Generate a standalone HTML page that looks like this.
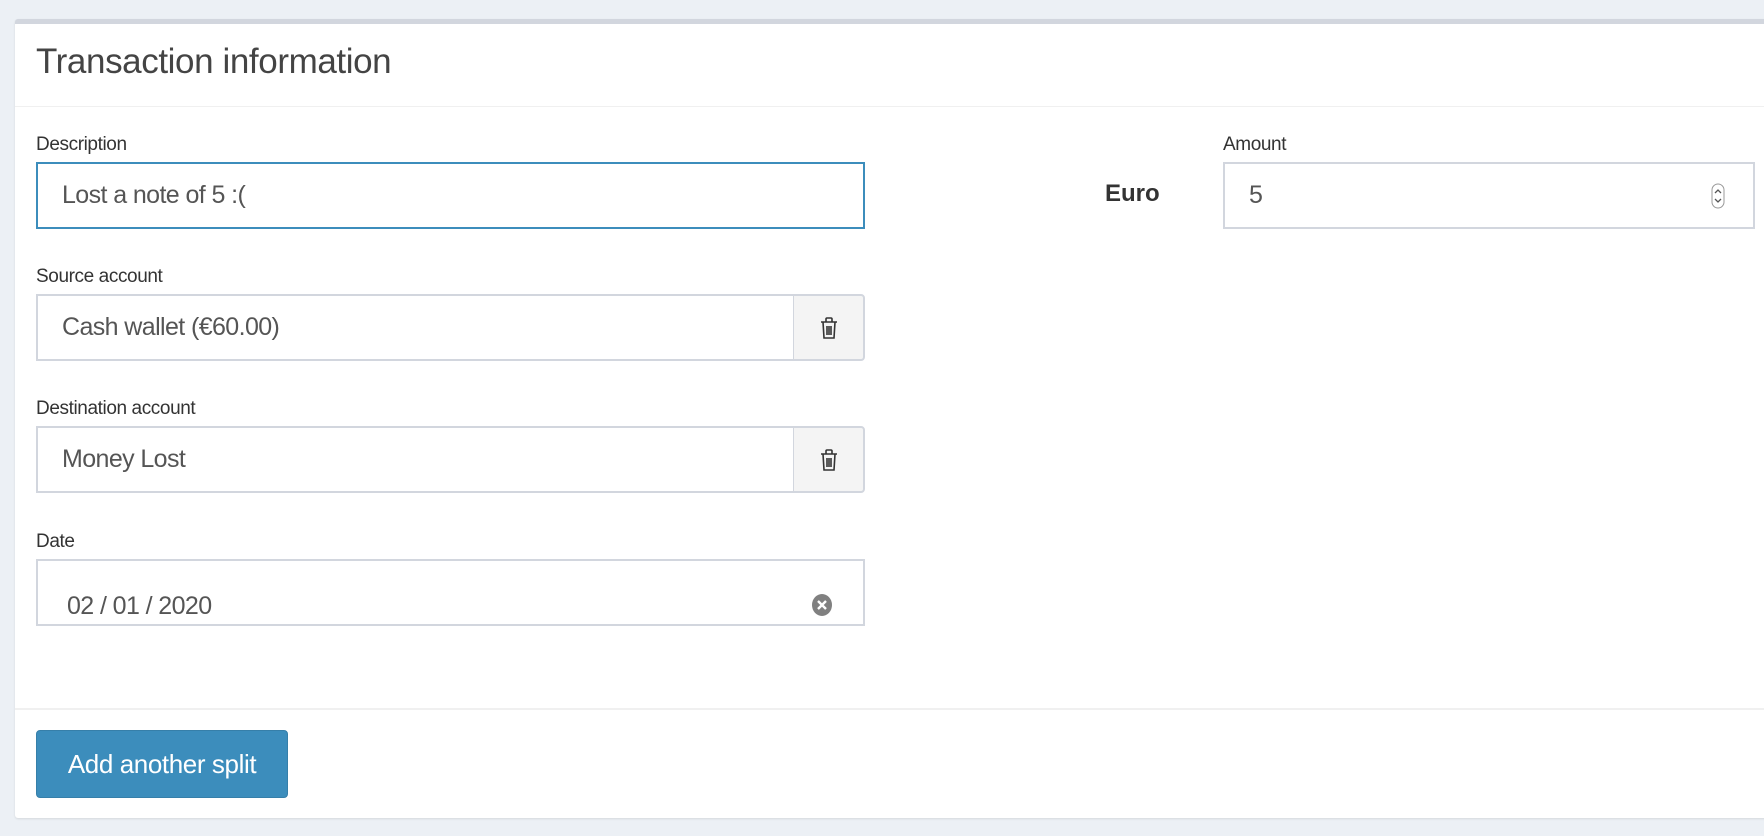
<!DOCTYPE html>
<html><head><style>
*{box-sizing:border-box;margin:0;padding:0}
body{width:1764px;height:836px;background:#ecf0f5;font-family:"Liberation Sans",sans-serif;position:relative;overflow:hidden;color:#333}
.card{position:absolute;left:15px;top:19px;width:1760px;height:799px;background:#fff;border-top:5px solid #d2d6de;border-radius:3px;box-shadow:0 1px 2px rgba(0,0,0,.1)}
.abs{position:absolute;white-space:nowrap}
.h{left:36px;top:42px;font-size:35px;color:#444;letter-spacing:-0.4px}
.hr{left:15px;width:1760px;height:1px;background:#f0f0f0}
.lbl{font-size:19px;color:#333;letter-spacing:-0.4px}
.in{border:2px solid #d2d6de;background:#fff;font-size:25px;color:#555;padding-left:24px;display:flex;align-items:center;letter-spacing:-0.6px}
.btn{background:#f4f4f4;border:2px solid #d2d6de;border-left:1px solid #d2d6de;border-radius:0 4px 4px 0;display:flex;align-items:center;justify-content:center}
</style></head><body>
<div class="card"></div>
<div class="abs h">Transaction information</div>
<div class="abs hr" style="top:106px"></div>

<div class="abs lbl" style="left:36px;top:134px">Description</div>
<div class="abs in" style="left:36px;top:162px;width:829px;height:67px;border-color:#3c8dbc">Lost a note of 5 :(</div>

<div class="abs lbl" style="left:1223px;top:134px">Amount</div>
<div class="abs" style="left:1105px;top:180px;font-size:24px;font-weight:bold;color:#333">Euro</div>
<div class="abs in" style="left:1223px;top:162px;width:532px;height:67px">5</div>
<svg class="abs" style="left:1711px;top:183px" width="14" height="26" viewBox="0 0 14 26"><rect x="1" y="1" width="12" height="24" rx="6" fill="#fff" stroke="#999"/><path d="M4 10l3-3 3 3M4 16l3 3 3-3" fill="none" stroke="#555" stroke-width="1.3"/></svg>

<div class="abs lbl" style="left:36px;top:266px">Source account</div>
<div class="abs in" style="left:36px;top:294px;width:758px;height:67px;border-right:none">Cash wallet (€60.00)</div>
<div class="abs btn" style="left:793px;top:294px;width:72px;height:67px"><svg width="22" height="26" viewBox="0 0 22 26"><path d="M3 7h16M8 7V4a1 1 0 0 1 1-1h4a1 1 0 0 1 1 1v3M5 7l1 16h10l1-16M9 11v9M11 11v9M13 11v9" fill="none" stroke="#333" stroke-width="1.6"/></svg></div>

<div class="abs lbl" style="left:36px;top:398px">Destination account</div>
<div class="abs in" style="left:36px;top:426px;width:758px;height:67px;border-right:none">Money Lost</div>
<div class="abs btn" style="left:793px;top:426px;width:72px;height:67px"><svg width="22" height="26" viewBox="0 0 22 26"><path d="M3 7h16M8 7V4a1 1 0 0 1 1-1h4a1 1 0 0 1 1 1v3M5 7l1 16h10l1-16M9 11v9M11 11v9M13 11v9" fill="none" stroke="#333" stroke-width="1.6"/></svg></div>

<div class="abs lbl" style="left:36px;top:531px">Date</div>
<div class="abs in" style="left:36px;top:559px;width:829px;height:67px"></div>
<div class="abs" style="left:67px;top:592px;font-size:25px;color:#555;letter-spacing:-0.6px">02 / 01 / 2020</div>
<svg class="abs" style="left:811px;top:593px" width="22" height="24" viewBox="0 0 22 24"><ellipse cx="11" cy="12" rx="10" ry="11" fill="#808080"/><path d="M7 8l8 8M15 8l-8 8" stroke="#fff" stroke-width="2.4"/></svg>

<div class="abs hr" style="top:708px;height:2px"></div>
<div class="abs" style="left:36px;top:730px;width:252px;height:68px;background:#3c8dbc;border:1px solid #367fa9;border-radius:4px;color:#fff;font-size:26px;display:flex;align-items:center;justify-content:center;letter-spacing:-0.4px">Add another split</div>
</body></html>
